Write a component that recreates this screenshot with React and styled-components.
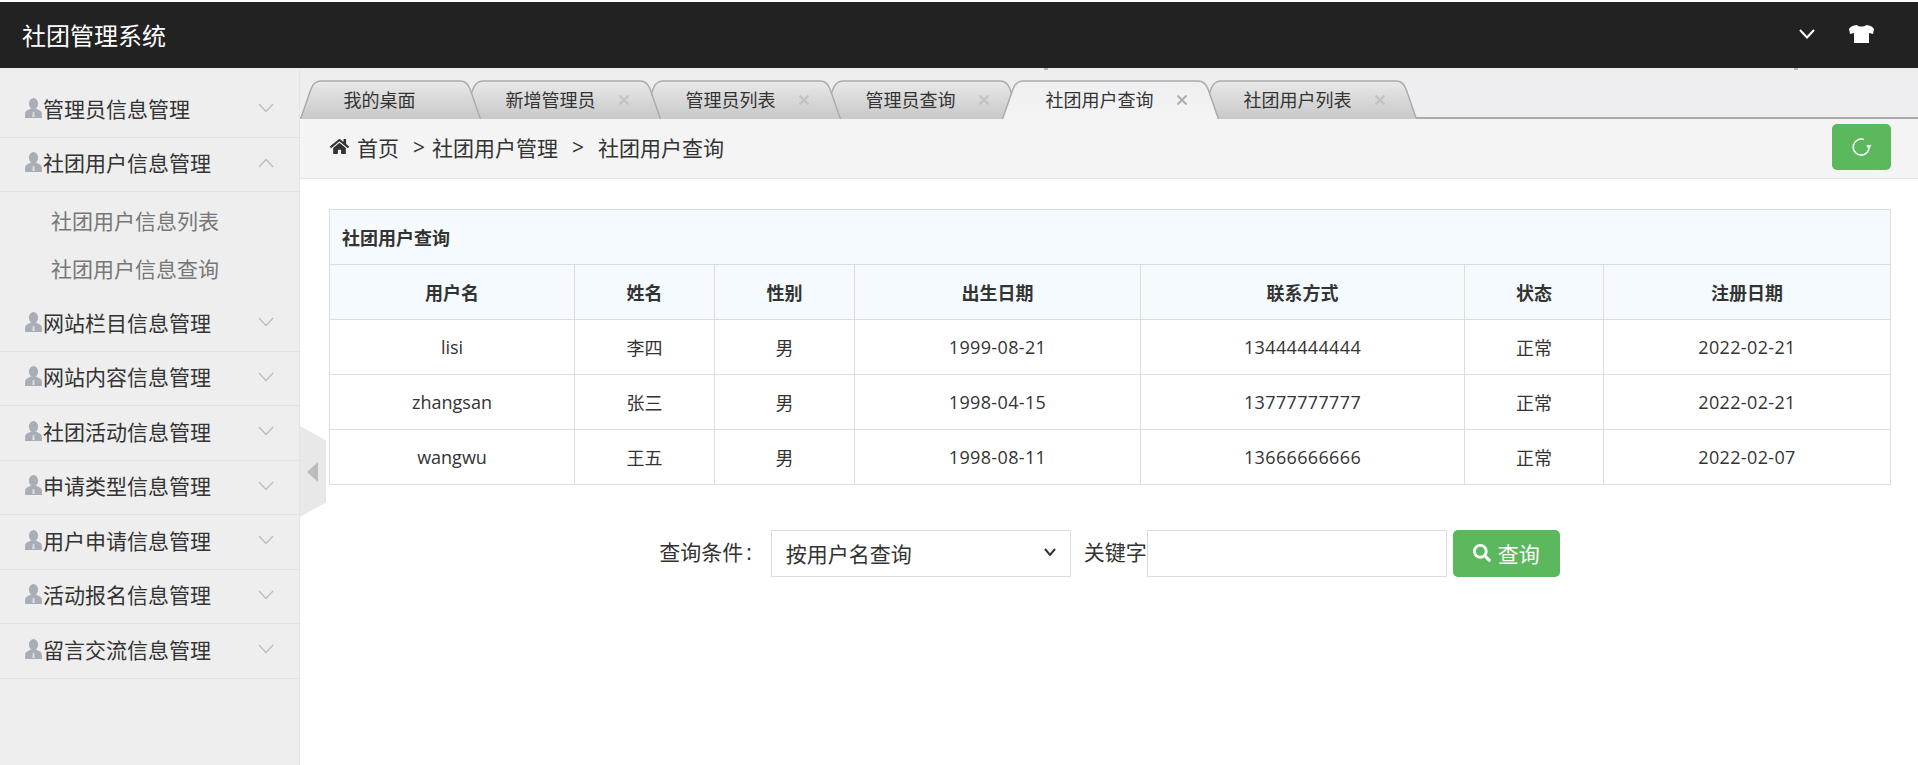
import React from 'react';
import styled, { createGlobalStyle } from 'styled-components';
import { FaHome, FaSearch } from 'react-icons/fa';

const FONT = '"Open Sans", "Noto Sans CJK SC", sans-serif';

const GlobalStyle = createGlobalStyle`
  html, body {
    margin: 0;
    padding: 0;
    background: #fff;
    overflow: hidden;
  }
  body {
    font-family: ${FONT};
    color: #333;
  }
  * {
    box-sizing: border-box;
  }
`;

const Page = styled.div`
  height: 100vh;
  padding-top: 2px;
  display: flex;
  flex-direction: column;
`;

const Header = styled.header`
  height: 66px;
  flex: none;
  background: #222;
  color: #fff;
  display: flex;
  align-items: center;
  justify-content: space-between;
  padding: 0 44px 0 22px;
`;

const Brand = styled.div`
  font-size: 24px;
  line-height: 1;
  margin-top: 1px;
`;

const HeaderIcons = styled.div`
  display: flex;
  align-items: center;
  gap: 34px;
  margin-bottom: 2px;
`;

const Main = styled.div`
  flex: 1;
  display: flex;
  position: relative;
  min-height: 0;
`;

const Sidebar = styled.aside`
  width: 300px;
  flex: none;
  background: #eee;
  border-right: 1px solid #e4e4e4;
  padding-top: 15px;
`;

const MenuRow = styled.div`
  height: 54.5px;
  display: flex;
  align-items: center;
  justify-content: space-between;
  padding: 0 25px 4px 25px;
  border-bottom: 1px solid #e2e2e2;
  font-size: 21px;
  color: #333;
`;

const MenuLabel = styled.span`
  display: flex;
  align-items: center;
  gap: 1px;
`;

const MenuChevron = styled.svg`
  margin-top: 1px;
`;

const SubMenu = styled.div`
  height: 105px;
  padding-top: 5px;
`;

const SubItem = styled.div`
  height: 48px;
  line-height: 48px;
  padding-left: 51px;
  font-size: 21px;
  color: #777;
`;

const Handle = styled.div`
  position: absolute;
  left: 300px;
  top: 358px;
  width: 26px;
  height: 91px;
  background: #e8e8e8;
  clip-path: polygon(0 0, 100% 16%, 100% 84%, 0 100%);
  display: flex;
  align-items: center;
  padding-left: 7px;

  &::before {
    content: '';
    border-style: solid;
    border-width: 10px 11px 10px 0;
    border-color: transparent #bbb transparent transparent;
  }
`;

/* the small grey marks just under the header */
const Speck = styled.span`
  position: absolute;
  top: 0;
  left: ${p => p.$left}px;
  width: 4px;
  height: 2px;
  background: #b5b5b5;
  z-index: 30;
`;

const Content = styled.main`
  flex: 1;
  min-width: 0;
  display: flex;
  flex-direction: column;
`;

const TabBar = styled.nav`
  height: 51px;
  flex: none;
  padding-top: 12px;
  background: #eeeef0;
  box-shadow: inset 0 -2px 0 #ababab;
  display: flex;
`;

const Tab = styled.div`
  position: relative;
  width: ${p => p.$w}px;
  height: 39px;
  flex: none;
  margin-left: ${p => (p.$first ? 0 : -19)}px;
  padding-left: 43.5px;
  z-index: ${p => p.$z};
  display: flex;
  align-items: center;
  font-size: 18px;
  line-height: 1;
  color: #333;
`;

const TabShape = styled.svg`
  position: absolute;
  left: 0;
  top: 0;
`;

const TabText = styled.span`
  position: relative;
`;

const TabClose = styled.svg`
  position: relative;
  margin-left: 23px;
  stroke: ${p => (p.$active ? '#a9aeb6' : '#bdc2c9')};
`;

const Crumbs = styled.div`
  height: 60px;
  flex: none;
  background: #f4f4f4;
  border-bottom: 1px solid #e6e6e6;
  display: flex;
  align-items: center;
  justify-content: space-between;
  padding: 0 27px 3px 30px;
`;

const CrumbTrail = styled.div`
  display: flex;
  align-items: center;
  margin-bottom: 1px;
  font-size: 21px;
  color: #333;
`;

const CrumbHome = styled.span`
  margin-left: 8px;
`;

const CrumbSep = styled.span`
  margin: 0 ${p => p.$after}px 0 14px;
`;

const ReloadButton = styled.button`
  width: 59px;
  height: 46px;
  border: 0;
  border-radius: 5px;
  background: #5cb85c;
  display: flex;
  align-items: center;
  justify-content: center;
  padding: 0 2px 0 0;
`;

const Body = styled.div`
  flex: 1;
  background: #fff;
  padding: 29.5px 28px 0 29px;
`;

const Table = styled.table`
  width: 1561px;
  table-layout: fixed;
  border-collapse: collapse;
  font-size: 18px;
  color: #333;
`;

const Col = styled.col`
  width: ${p => p.$w}px;
`;

const TitleCell = styled.th`
  height: 55px;
  padding: 0 12px;
  text-align: left;
  font-weight: 700;
  background: #f5fafe;
  border: 1px solid #ddd;
`;

const HeadCell = styled.th`
  height: 55px;
  padding: 0;
  text-align: center;
  font-weight: 700;
  background: #f5fafe;
  border: 1px solid #ddd;
`;

const Cell = styled.td`
  height: 55px;
  padding: 0;
  text-align: center;
  letter-spacing: ${p => (p.$num ? '0.35px' : '0')};
  border: 1px solid #ddd;
`;

const SearchRow = styled.form`
  margin-top: 45px;
  display: flex;
  align-items: center;
  justify-content: center;
  font-size: 21px;
  color: #333;
`;

const SearchLabel = styled.label`
  margin-bottom: 4px;
  margin-right: ${p => p.$gap || 0}px;
`;

const LabelColon = styled.span`
  margin-left: 3px;
`;

const SelectWrap = styled.div`
  position: relative;
  margin-right: 13px;
`;

const SearchSelect = styled.select`
  display: block;
  width: 300px;
  height: 47px;
  padding: 2px 0 0 14px;
  appearance: none;
  background: #fff;
  border: 1px solid #ddd;
  border-radius: 0;
  font: 21px ${FONT};
  color: #333;
`;

const SelectArrow = styled.svg`
  position: absolute;
  right: 15px;
  top: 18px;
  pointer-events: none;
`;

const KeywordInput = styled.input`
  width: 300px;
  height: 47px;
  margin-right: 6px;
  padding: 0 10px;
  border: 1px solid #ddd;
  background: #fff;
`;

const SearchButton = styled.button`
  width: 107px;
  height: 47px;
  border: 0;
  border-radius: 5px;
  background: #5cb85c;
  color: #fff;
  font: 21px ${FONT};
  display: flex;
  align-items: center;
  justify-content: center;
  gap: 7px;
  padding: 0;
`;

const UserIcon = () => (
  <svg width="17" height="20" viewBox="0 0 17 20">
    <ellipse cx="8.5" cy="5.6" rx="4.6" ry="5.6" fill="#a9adb5" />
    <path
      d="M5.6 10.5 C4 12 .6 12.4 .2 15 L0 20 H17 L16.8 15 C16.4 12.4 13 12 11.4 10.5 Z"
      fill="#a9adb5"
    />
    <path d="M7.7 14 H9.3 L9.7 19 H7.3 Z" fill="#dcdde0" />
  </svg>
);

const Chevron = ({ up }) => (
  <MenuChevron width="16" height="10" viewBox="0 0 16 10" fill="none" stroke="#bcbcbc" strokeWidth="1.3">
    <path d={up ? 'M1 9 L8 1.5 L15 9' : 'M1 1 L8 8.5 L15 1'} />
  </MenuChevron>
);

const menus = [
  { name: '管理员信息管理' },
  { name: '社团用户信息管理', open: true, items: ['社团用户信息列表', '社团用户信息查询'] },
  { name: '网站栏目信息管理' },
  { name: '网站内容信息管理' },
  { name: '社团活动信息管理' },
  { name: '申请类型信息管理' },
  { name: '用户申请信息管理' },
  { name: '活动报名信息管理' },
  { name: '留言交流信息管理' },
];

const tabs = [
  { name: '我的桌面', w: 181 },
  { name: '新增管理员', w: 199, close: true },
  { name: '管理员列表', w: 199, close: true },
  { name: '管理员查询', w: 199, close: true },
  { name: '社团用户查询', w: 217, close: true, active: true },
  { name: '社团用户列表', w: 217, close: true },
];

const columns = [
  { name: '用户名', w: 245 },
  { name: '姓名', w: 140 },
  { name: '性别', w: 140 },
  { name: '出生日期', w: 286 },
  { name: '联系方式', w: 324 },
  { name: '状态', w: 139 },
  { name: '注册日期', w: 287 },
];

const users = [
  ['lisi', '李四', '男', '1999-08-21', '13444444444', '正常', '2022-02-21'],
  ['zhangsan', '张三', '男', '1998-04-15', '13777777777', '正常', '2022-02-21'],
  ['wangwu', '王五', '男', '1998-08-11', '13666666666', '正常', '2022-02-07'],
];

const tabPath = w =>
  `M.5 39 L11 9 Q14 1 21 1 L${w - 21} 1 Q${w - 14} 1 ${w - 11} 9 L${w - .5} 39`;

const TabItem = ({ tab, index }) => {
  const { name, w, close, active } = tab;
  const id = `tab-fill-${index}`;
  return (
    <Tab $w={w} $first={index === 0} $z={active ? 20 : tabs.length - index}>
      <TabShape width={w} height="39">
        <defs>
          <linearGradient id={id} x1="0" y1="0" x2="0" y2="1">
            <stop offset="0" stopColor={active ? '#efeff1' : '#e9e9e9'} />
            <stop offset="1" stopColor={active ? '#f4f4f4' : '#c8c8c8'} />
          </linearGradient>
        </defs>
        <path d={tabPath(w)} fill={`url(#${id})`} stroke="#ababab" strokeWidth="1.5" />
      </TabShape>
      <TabText>{name}</TabText>
      {close && (
        <TabClose $active={active} width="10" height="10" viewBox="0 0 10 10" strokeWidth="2">
          <path d="M.5 .5 L9.5 9.5 M9.5 .5 L.5 9.5" />
        </TabClose>
      )}
    </Tab>
  );
};

const App = () => (
  <Page>
    <GlobalStyle />
    <Header>
      <Brand>社团管理系统</Brand>
      <HeaderIcons>
        <svg width="16" height="10" viewBox="0 0 16 10" fill="none" stroke="#fff" strokeWidth="2">
          <path d="M1 1 L8 8.5 L15 1" />
        </svg>
        <svg width="25" height="18" viewBox="0 0 25 18" fill="#fff">
          <path d="M8 0 C9.5 2 15.5 2 17 0 L20 .5 C22 1 24 2 25 4 L24 9 L20 8 L20 18 L5 18 L5 8 L1 9 L0 4 C1 2 3 1 5 .5 Z" />
        </svg>
      </HeaderIcons>
    </Header>
    <Main>
      <Speck $left={1044} />
      <Speck $left={1794} />
      <Sidebar>
        {menus.map(menu => (
          <React.Fragment key={menu.name}>
            <MenuRow>
              <MenuLabel>
                <UserIcon />
                {menu.name}
              </MenuLabel>
              <Chevron up={menu.open} />
            </MenuRow>
            {menu.items && (
              <SubMenu>
                {menu.items.map(item => (
                  <SubItem key={item}>{item}</SubItem>
                ))}
              </SubMenu>
            )}
          </React.Fragment>
        ))}
      </Sidebar>
      <Handle />
      <Content>
        <TabBar>
          {tabs.map((tab, i) => (
            <TabItem key={tab.name} tab={tab} index={i} />
          ))}
        </TabBar>
        <Crumbs>
          <CrumbTrail>
            <FaHome size={19} />
            <CrumbHome>首页</CrumbHome>
            <CrumbSep $after={7}>&gt;</CrumbSep>
            <span>社团用户管理</span>
            <CrumbSep $after={14}>&gt;</CrumbSep>
            <span>社团用户查询</span>
          </CrumbTrail>
          <ReloadButton type="button">
            <svg width="22" height="22" viewBox="0 0 22 22" fill="none" stroke="#fff" strokeWidth="1.6">
              <path d="M14 3.6 A8 8 0 1 0 19 12.6" />
              <path d="M16.6 9.6 L21 9.2 L19 13 Z" fill="#fff" strokeWidth="0.5" />
            </svg>
          </ReloadButton>
        </Crumbs>
        <Body>
          <Table>
            <colgroup>
              {columns.map(col => (
                <Col key={col.name} $w={col.w} />
              ))}
            </colgroup>
            <thead>
              <tr>
                <TitleCell colSpan={7}>社团用户查询</TitleCell>
              </tr>
              <tr>
                {columns.map(col => (
                  <HeadCell key={col.name}>{col.name}</HeadCell>
                ))}
              </tr>
            </thead>
            <tbody>
              {users.map(row => (
                <tr key={row[0]}>
                  {row.map((value, i) => (
                    <Cell key={i} $num={i === 3 || i === 4 || i === 6}>{value}</Cell>
                  ))}
                </tr>
              ))}
            </tbody>
          </Table>
          <SearchRow onSubmit={e => e.preventDefault()}>
            <SearchLabel $gap={19}>
              查询条件<LabelColon>:</LabelColon>
            </SearchLabel>
            <SelectWrap>
              <SearchSelect defaultValue="username">
                <option value="username">按用户名查询</option>
                <option value="name">按姓名查询</option>
              </SearchSelect>
              <SelectArrow width="12" height="9" viewBox="0 0 12 9" fill="none" stroke="#333" strokeWidth="2">
                <path d="M1 1 L6 7 L11 1" />
              </SelectArrow>
            </SelectWrap>
            <SearchLabel>关键字</SearchLabel>
            <KeywordInput type="text" />
            <SearchButton type="button">
              <FaSearch size={18} />
              查询
            </SearchButton>
          </SearchRow>
        </Body>
      </Content>
    </Main>
  </Page>
);

export default App;
